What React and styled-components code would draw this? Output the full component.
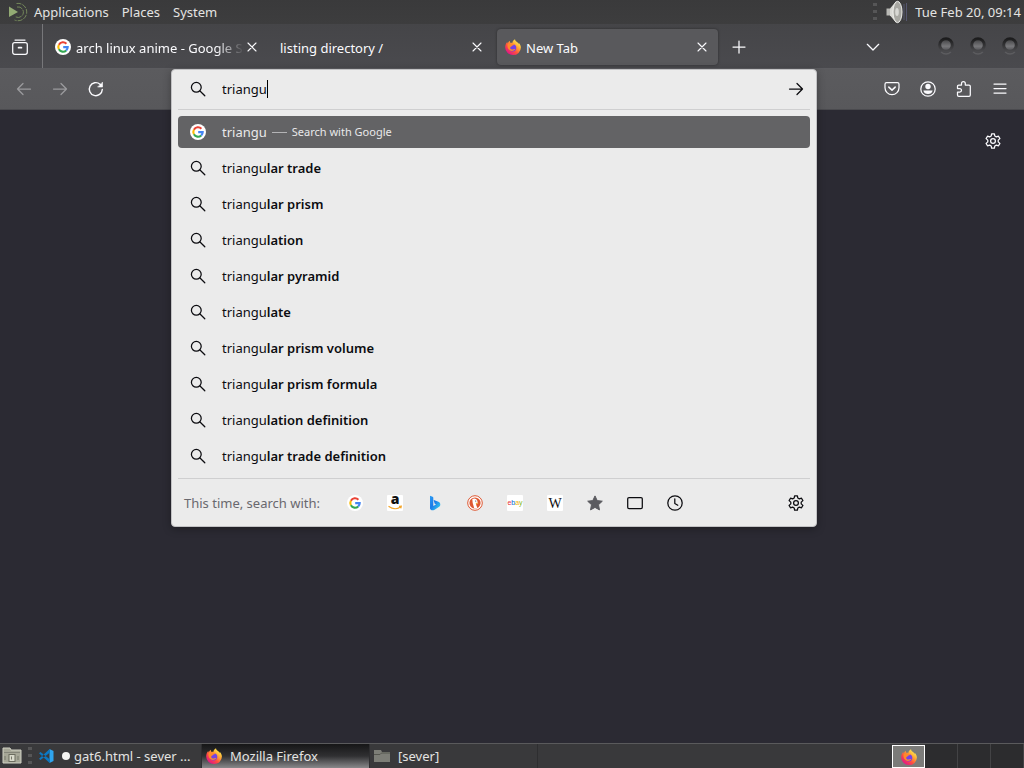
import React, { useState } from "react";
import styled, { createGlobalStyle } from "styled-components";

const GlobalStyle = createGlobalStyle`
  *, *::before, *::after {
    box-sizing: border-box;
  }

  body {
    margin: 0;
    background: #2b2a33;
    font-family: "Noto Sans", sans-serif;
    font-size: 13px;
    line-height: 20px;
    color: #fbfbfe;
  }

  button, input {
    margin: 0;
    padding: 0;
    border: none;
    outline: none;
    background: none;
    color: inherit;
    font: inherit;
    text-align: left;
  }

  svg {
    display: block;
    flex: none;
    overflow: visible;
  }
`;

const Desktop = styled.div`
  display: flex;
  flex-direction: column;
  min-height: 100vh;
`;

/* ---------- top panel ---------- */

const TopPanel = styled.header`
  display: flex;
  align-items: center;
  height: 24px;
  padding: 0 3px 0 8px;
  background: linear-gradient(#3a3a3b, #3d3d3e);
  color: #e4e4e2;
`;

const PanelMenu = styled.nav`
  display: flex;
  align-items: center;
  gap: 13px;
  margin-left: 6px;
`;

const PanelStatus = styled.div`
  display: flex;
  align-items: center;
  gap: 7px;
  margin-left: auto;
`;

const Grip = styled.span`
  width: 4px;
  height: 18px;
  background: repeating-linear-gradient(#565657 0 3px, #3a3a3b 3px 7px);
`;

/* ---------- tab strip ---------- */

const TabStrip = styled.div`
  display: flex;
  align-items: center;
  height: 45px;
  background: linear-gradient(#454548, #4a4a4e);
  border-bottom: 1px solid #5c5c60;
`;

const RecentButton = styled.button`
  display: flex;
  align-items: center;
  align-self: stretch;
  width: 43px;
  padding: 2px 0 0 12px;
  border-right: 1px solid #77777a;
`;

const Tabs = styled.div`
  display: flex;
  flex: 0 1 auto;
  gap: 4px;
  min-width: 0;
  margin-left: 4px;
  padding-top: 2px;
`;

const Tab = styled.div`
  display: flex;
  align-items: center;
  flex: 0 1 221px;
  width: 221px;
  min-width: 80px;
  height: 36px;
  padding: 0 8px;
  border-radius: 4px;
  background: ${props => props.$active ? '#59595c' : 'transparent'};
  box-shadow: ${props => props.$active ? '0 0 3px rgba(0, 0, 0, 0.4)' : 'none'};
`;

const TabLabel = styled.button`
  display: flex;
  align-items: center;
  gap: 5px;
  flex: 1;
  min-width: 0;
  overflow: hidden;
  white-space: nowrap;
  mask-image: ${props => props.$fade ? 'linear-gradient(to right, #000 calc(100% - 28px), transparent)' : 'none'};
`;

const TabTitle = styled.span`
  padding-top: 2px;
`;

const CloseButton = styled.button`
  display: flex;
  padding: 3px;
`;

const NewTabButton = styled.button`
  display: flex;
  padding: 2px 13px 0;
`;

const WindowControls = styled.div`
  display: flex;
  align-items: center;
  gap: 12px;
  margin-left: auto;
  padding-right: 4px;
`;

const AllTabsButton = styled.button`
  display: flex;
  margin-right: 43px;
  padding-top: 2px;
`;

const WindowButton = styled.button`
  display: flex;
`;

/* ---------- navigation bar ---------- */

const NavBar = styled.div`
  display: flex;
  align-items: flex-start;
  height: 41px;
  background: linear-gradient(#5b5b5e, #58585b);
  border-bottom: 1px solid #4a4a4e;
`;

const NavGroup = styled.div`
  display: flex;
  align-items: center;
  gap: 20px;
  height: 40px;
  padding: 0 16px;
`;

const NavButton = styled.button`
  display: flex;
  opacity: ${props => props.disabled ? 0.4 : 1};
`;

const UrlArea = styled.div`
  position: relative;
  flex: 1;
  height: 40px;
  margin: 0 51px;
`;

const UrlPopup = styled.form`
  position: absolute;
  z-index: 2;
  top: 0;
  left: 0;
  right: 0;
  padding: 0 6px;
  border: 1px solid #c2c2c4;
  border-radius: 4px;
  background: #ebebeb;
  color: #0c0c10;
  box-shadow: 0 2px 8px rgba(0, 0, 0, 0.3);
`;

const UrlRow = styled.div`
  display: flex;
  align-items: center;
  height: 40px;
  padding: 0 6px 2px 12px;
  border-bottom: 1px solid #cfcfd0;
`;

const UrlInput = styled.input`
  field-sizing: content;
  min-width: 8px;
  margin-left: 16px;
  caret-color: transparent;
`;

const Caret = styled.span`
  width: 1px;
  height: 18px;
  background: #000;
`;

const GoButton = styled.button`
  display: flex;
  margin-left: auto;
`;

const Results = styled.div`
  display: flex;
  flex-direction: column;
  gap: 4px;
  padding: 6px 0;
`;

const Result = styled.button`
  display: flex;
  align-items: center;
  height: 32px;
  padding: 0 12px;
  border-radius: 4px;
  background: ${props => props.$selected ? '#636365' : 'transparent'};
  color: ${props => props.$selected ? '#e9e9ea' : 'inherit'};
`;

const ResultText = styled.span`
  margin-left: 16px;
  white-space: pre;

  strong {
    font-weight: 600;
  }
`;

const ResultAction = styled.span`
  margin-left: 5px;
  font-size: 11px;
`;

const Dash = styled.span`
  width: 15px;
  height: 1px;
  margin-left: 5px;
  background: #b4b4b6;
`;

const OneOffs = styled.div`
  display: flex;
  align-items: center;
  height: 48px;
  padding: 0 6px;
  border-top: 1px solid #cfcfd0;
`;

const OneOffLabel = styled.span`
  width: 151px;
  color: #69686e;
`;

const OneOffButton = styled.button`
  display: flex;
  justify-content: center;
  width: 40px;
`;

/* ---------- page ---------- */

const Page = styled.main`
  display: flex;
  justify-content: flex-end;
  align-items: flex-start;
  flex: 1;
  padding: 23px;
  background: #2b2a33;
`;

const PageButton = styled.button`
  display: flex;
`;

/* ---------- bottom panel ---------- */

const BottomPanel = styled.footer`
  display: flex;
  align-items: center;
  height: 25px;
  padding-left: 2px;
  border-top: 1px solid #5a5a5c;
  background: #39393b;
  color: #e4e4e2;
`;

const DesktopButton = styled.button`
  display: flex;
  margin-right: 6px;
`;

const TaskList = styled.div`
  display: flex;
  align-self: stretch;
  flex: 1;
  min-width: 0;
  margin-left: 2px;
`;

const Task = styled.button`
  display: flex;
  align-items: center;
  gap: 8px;
  flex: 0 1 168px;
  min-width: 0;
  padding: 0 4px;
  white-space: nowrap;
  border-right: 1px solid #2e2e30;
  background: ${props => props.$active ? 'linear-gradient(#161617, #303032 50%, #88888a)' : 'transparent'};
`;

const TaskTitle = styled.span`
  display: flex;
  align-items: center;
  gap: 4px;
`;

const UnsavedDot = styled.i`
  width: 8px;
  height: 8px;
  border-radius: 50%;
  background: #f4f4f2;
`;

const Workspaces = styled.div`
  display: flex;
  align-self: stretch;
`;

const Workspace = styled.button`
  display: flex;
  justify-content: center;
  align-items: center;
  width: 33px;
  border-right: 1px solid #434345;
  background: #2c2c2e;

  ${props => props.$active && `
    margin-top: 1px;
    border: 1px solid #fff;
    background: #7b7b79;
  `}
`;

/* ---------- icons ---------- */

const Icon = ({ size = 16, children }) => (
  <svg width={size} height={size} viewBox="0 0 16 16" fill="none" stroke="currentColor" strokeWidth="1.25" strokeLinecap="round" strokeLinejoin="round" aria-hidden="true">
    {children}
  </svg>
);

const SearchIcon = () => (
  <Icon><circle cx="6.3" cy="6.3" r="4.9" /><path d="M10 10l4.8 4.8" /></Icon>
);

const CloseIcon = () => (
  <svg width="10" height="10" viewBox="0 0 10 10" stroke="currentColor" strokeWidth="1.1" strokeLinecap="round" aria-hidden="true">
    <path d="M1 1l8 8M9 1L1 9" />
  </svg>
);

const GearIcon = () => (
  <Icon>
    <circle cx="8" cy="8" r="2.4" />
    <path d="M6.6.8h2.8L9.800 3l1.600.9 2.100-.7 1.400 2.400-1.700 1.500v1.800l1.700 1.500-1.400 2.400-2.100-.7-1.600.9-.4 2.200H6.600L6.200 13l-1.600-.9-2.100.7-1.400-2.400 1.700-1.500V7.100L1.100 5.600l1.400-2.400 2.100.7L6.200 3z" />
  </Icon>
);

const GoogleIcon = ({ size = 16 }) => (
  <svg width={size} height={size} viewBox="0 0 16 16" aria-hidden="true">
    <circle cx="8" cy="8" r="8" fill="#fff" />
    <g fill="none" strokeWidth="2.1">
      <path d="M11.4 4.7A4.7 4.7 0 0 0 3.9 5.7" stroke="#ea4335" />
      <path d="M3.9 5.7a4.7 4.7 0 0 0 0 4.6" stroke="#fbbc05" />
      <path d="M3.9 10.3a4.7 4.7 0 0 0 7.3 1.1" stroke="#34a853" />
      <path d="M11.2 11.4A4.7 4.7 0 0 0 12.7 8.1H8.2" stroke="#4285f4" />
    </g>
  </svg>
);

const FirefoxIcon = () => (
  <svg width="16" height="16" viewBox="0 0 16 16" aria-hidden="true">
    <defs>
      <linearGradient id="fox" x1="0.85" y1="0.1" x2="0.2" y2="0.9">
        <stop offset="0" stopColor="#fff44f" />
        <stop offset="0.35" stopColor="#ffa436" />
        <stop offset="0.65" stopColor="#ff4f3e" />
        <stop offset="1" stopColor="#e31587" />
      </linearGradient>
    </defs>
    <path fill="url(#fox)" d="M10 .2c.2 1.4 1 2 2 2.9.9.8 1.3 1.3 1.7 2.1.1-.6 0-1-.1-1.4C15 5 15.9 6.700 15.900 8.600A7.800 7.500 0 0 1 .2 8.500C.1 6.200 1 4.400 2.300 2.900l.3 1.500C3.300 3.200 4 2.400 5 1.800c-.2.7-.1 1.400.2 1.900.8-.1 1.500 0 2.100.3C7.500 2.300 8.500.9 10 .2z" />
    <circle cx="7.7" cy="8.8" r="3.6" fill="#7542e5" />
    <path fill="#ff8a2b" d="M2.600 5.200C4.200 3.800 6 4 7.300 4.600c1 .1 1.700.4 2 .8-.5.9-1.700.8-2.100 1.400-.5.9-1.500.8-2 1.600-.2 1.200.8 2 2 2.100 1.300 0 2-.9 3.200-.5-1.300 2-4.600 2.800-6.500.6C2.600 9.200 2.200 7 2.600 5.200z" />
  </svg>
);

const AmazonIcon = () => (
  <svg width="16" height="16" viewBox="0 0 16 16" aria-hidden="true">
    <rect width="16" height="16" rx="1" fill="#fff" />
    <text x="8" y="9" textAnchor="middle" fontFamily="Open Sans, sans-serif" fontWeight="800" fontSize="14" fill="#111">a</text>
    <path d="M1.5 11.3c4 2.9 8.500 3 12 .7M12 11.300l2.300-.2-.5 2.300" fill="none" stroke="#f3a52b" strokeWidth="1.2" />
  </svg>
);

const BingIcon = () => (
  <svg width="16" height="16" viewBox="0 0 16 16" aria-hidden="true">
    <defs>
      <linearGradient id="bing" x1="0" y1="0" x2="1" y2="1">
        <stop offset="0" stopColor="#2b9df4" />
        <stop offset="0.45" stopColor="#1b7ae8" />
        <stop offset="1" stopColor="#38dcf0" />
      </linearGradient>
    </defs>
    <path fill="url(#bing)" d="M3 .8l2.600 1c.5.200.7.500.7 1v8.200l2.700-1.500-1.300-.8-.9-3c-.1-.5.2-.7.7-.5l3.900 1.600c1.500.7 1.900 1.700 1.900 2.800 0 1.100-.5 1.900-1.500 2.500l-4.600 2.800C5.200 16 3 15 3 12.900z" />
  </svg>
);

const DuckIcon = () => (
  <svg width="16" height="16" viewBox="0 0 16 16" aria-hidden="true">
    <circle cx="8" cy="8" r="7.3" fill="#fff" stroke="#de5833" strokeWidth="1" />
    <circle cx="8" cy="8" r="5.6" fill="#de5833" />
    <path fill="#fff" d="M5.3 4.300c1.500-1.600 4.700-.8 5.100 1.700l.3 2.300-1.700 1.200 1.300 3.300c-1 .6-2.300.7-3.100.4L5.700 8z" />
    <path fill="#f9b233" d="M8.600 7.800l3 .2-2.500 1.200z" />
    <circle cx="8.7" cy="6" r="0.6" fill="#334" />
  </svg>
);

const EbayIcon = () => (
  <svg width="16" height="16" viewBox="0 0 16 16" aria-hidden="true">
    <rect width="16" height="16" rx="1" fill="#fff" />
    <text x="8" y="10" textAnchor="middle" fontFamily="Liberation Sans, sans-serif" fontSize="7">
      <tspan fill="#e53238">e</tspan><tspan fill="#0064d2">b</tspan><tspan fill="#f5af02">a</tspan><tspan fill="#86b817">y</tspan>
    </text>
  </svg>
);

const WikiIcon = () => (
  <svg width="16" height="16" viewBox="0 0 16 16" aria-hidden="true">
    <rect width="16" height="16" rx="1" fill="#fff" />
    <text x="8" y="13" textAnchor="middle" fontFamily="Liberation Serif, serif" fontSize="14" fill="#111">W</text>
  </svg>
);

const StarIcon = () => (
  <svg width="16" height="16" viewBox="0 0 16 16" aria-hidden="true">
    <path fill="#5b5b60" stroke="#5b5b60" strokeLinejoin="round" d="M8 .9l2.200 4.700 5.100.6-3.800 3.500 1 5.200L8 12.400l-4.500 2.500 1-5.200L.7 6.200l5.100-.6z" />
  </svg>
);

const TabsIcon = () => (
  <Icon><rect x="0.7" y="2.5" width="14.6" height="11" rx="1.3" /></Icon>
);

const ClockIcon = () => (
  <Icon><circle cx="8" cy="8" r="7.2" /><path d="M7.8 3.8V8.500l3 1.800" /></Icon>
);

const RecentIcon = () => (
  <Icon><path d="M3 1h10" /><rect x="0.7" y="3.700" width="14.600" height="11.600" rx="2" /><path d="M6.600 8.700h2.800" strokeWidth="1.800" /></Icon>
);

const WindowDot = () => (
  <svg width="20" height="20" viewBox="0 0 20 20" aria-hidden="true">
    <defs>
      <linearGradient id="dotFill" x1="0" y1="0" x2="0" y2="1">
        <stop offset="0" stopColor="#3c3c3e" />
        <stop offset="0.6" stopColor="#77777a" />
        <stop offset="1" stopColor="#4a4a4e" />
      </linearGradient>
      <linearGradient id="dotRing" x1="0" y1="0" x2="0" y2="1">
        <stop offset="0" stopColor="#1c1c1d" />
        <stop offset="1" stopColor="#4a4a4d" />
      </linearGradient>
    </defs>
    <path d="M5 16q5 4 10 0" fill="none" stroke="#5c5c5f" strokeWidth="1.5" />
    <circle cx="10" cy="9" r="6.3" fill="url(#dotFill)" stroke="url(#dotRing)" strokeWidth="3" />
  </svg>
);

const MateIcon = () => (
  <svg width="20" height="20" viewBox="0 0 20 20" fill="none" stroke="#73875a" aria-hidden="true">
    <path d="M1 4.5v10.500l9-5z" fill="#93aa74" stroke="none" />
    <path d="M8.500 1.500a8.700 8.700 0 1 1-2 16.500" strokeDasharray="5 1" />
    <path d="M9 5a5.300 5.300 0 1 1-1.500 9.800" strokeDasharray="6 1" />
  </svg>
);

const VolumeIcon = () => (
  <svg width="24" height="24" viewBox="0 0 24 24" aria-hidden="true">
    <path d="M2.500 8.500h4v7h-4z" fill="#b9b9b5" />
    <path d="M6 8.500l6-7q2 10.500 0 21l-6-7z" fill="#d8d8d4" />
    <ellipse cx="13.500" cy="12" rx="4.500" ry="10.700" fill="#a8a8a3" stroke="#f0f0ed" />
    <ellipse cx="13" cy="12" rx="1.800" ry="4" fill="#d8d8d4" />
    <path d="M20 4v16M22.500 3v18" stroke="#55566f" />
  </svg>
);

const FolderIcon = ({ color = '#7d7e77' }) => (
  <svg width="16" height="16" viewBox="0 0 16 16" aria-hidden="true">
    <path d="M0 2h7l1 2h8v10H0z" fill={color} />
    <path d="M0 6.500h6l1.500-1.500H16" stroke="#55564f" fill="none" />
  </svg>
);

const DesktopIcon = () => (
  <svg width="20" height="18" viewBox="0 0 20 18" aria-hidden="true">
    <path d="M1 1h7l1 2h10v13H1z" fill="#a6a797" stroke="#d0d1c4" />
    <path d="M2 5.500h16" stroke="#85867a" />
    <rect x="7" y="7.500" width="6" height="7" fill="#d9dacb" stroke="#6b6c5f" />
    <path d="M9.500 9.500v3M3 9v4M16 9v4" stroke="#77786a" />
  </svg>
);

const CodeIcon = () => (
  <svg width="16" height="16" viewBox="0 0 16 16" aria-hidden="true">
    <path d="M11.500 1L15.500 3v10l-4 2z" fill="#2fa5ee" />
    <path d="M1 5.200L2.500 4l9.200 7.200V15zM1 10.800L2.500 12l9.200-7.200V1z" fill="#0b78c4" />
  </svg>
);

/* ---------- data ---------- */

const suggestions = [
  "lar trade",
  "lar prism",
  "lation",
  "lar pyramid",
  "late",
  "lar prism volume",
  "lar prism formula",
  "lation definition",
  "lar trade definition",
];

const engines = [
  { name: "Google", icon: <GoogleIcon /> },
  { name: "Amazon", icon: <AmazonIcon /> },
  { name: "Bing", icon: <BingIcon /> },
  { name: "DuckDuckGo", icon: <DuckIcon /> },
  { name: "eBay", icon: <EbayIcon /> },
  { name: "Wikipedia", icon: <WikiIcon /> },
  { name: "Bookmarks", icon: <StarIcon /> },
  { name: "Tabs", icon: <TabsIcon /> },
  { name: "History", icon: <ClockIcon /> },
];

const tabs = [
  { title: "arch linux anime - Google Search", icon: <GoogleIcon />, fade: true },
  { title: "listing directory /" },
  { title: "New Tab", icon: <FirefoxIcon /> },
];

function UrlBar() {
  const [query, setQuery] = useState("triangu");

  return (
    <UrlArea>
      <UrlPopup onSubmit={(e) => e.preventDefault()}>
        <UrlRow>
          <SearchIcon />
          <UrlInput aria-label="Search or enter address" value={query} onChange={(e) => setQuery(e.target.value)} />
          <Caret />
          <GoButton type="submit" aria-label="Go"><Icon><path d="M1.500 8h13M9 2.500L14.500 8 9 13.500" /></Icon></GoButton>
        </UrlRow>
        <Results>
          <Result type="button" $selected>
            <GoogleIcon />
            <ResultText>{query}</ResultText>
            <Dash />
            <ResultAction>Search with Google</ResultAction>
          </Result>
          {suggestions.map((rest) => (
            <Result type="button" key={rest}>
              <SearchIcon />
              <ResultText>triangu<strong>{rest}</strong></ResultText>
            </Result>
          ))}
        </Results>
        <OneOffs>
          <OneOffLabel>This time, search with:</OneOffLabel>
          {engines.map(({ name, icon }) => (
            <OneOffButton type="button" key={name} aria-label={name}>{icon}</OneOffButton>
          ))}
          <GoButton type="button" aria-label="Search settings"><GearIcon /></GoButton>
        </OneOffs>
      </UrlPopup>
    </UrlArea>
  );
}

export default function App() {
  const [active, setActive] = useState(2);

  return (
    <Desktop>
      <GlobalStyle />
      <TopPanel>
        <MateIcon />
        <PanelMenu>
          <button>Applications</button>
          <button>Places</button>
          <button>System</button>
        </PanelMenu>
        <PanelStatus>
          <Grip />
          <VolumeIcon />
          <span>Tue Feb 20, 09:14</span>
        </PanelStatus>
      </TopPanel>

      <TabStrip>
        <RecentButton aria-label="Recent browsing"><RecentIcon /></RecentButton>
        <Tabs>
          {tabs.map(({ title, icon, fade }, i) => (
            <Tab key={title} $active={active === i}>
              <TabLabel $fade={fade} onClick={() => setActive(i)}>{icon}<TabTitle>{title}</TabTitle></TabLabel>
              <CloseButton aria-label={"Close " + title}><CloseIcon /></CloseButton>
            </Tab>
          ))}
        </Tabs>
        <NewTabButton aria-label="New tab"><Icon><path d="M8 2v12M2 8h12" /></Icon></NewTabButton>
        <WindowControls>
          <AllTabsButton aria-label="List all tabs"><Icon><path d="M2.300 5.300L8 11l5.700-5.700" /></Icon></AllTabsButton>
          <WindowButton aria-label="Minimize"><WindowDot /></WindowButton>
          <WindowButton aria-label="Maximize"><WindowDot /></WindowButton>
          <WindowButton aria-label="Close window"><WindowDot /></WindowButton>
        </WindowControls>
      </TabStrip>

      <NavBar>
        <NavGroup>
          <NavButton disabled aria-label="Back"><Icon><path d="M14.500 8h-13M7 2.500L1.500 8 7 13.500" /></Icon></NavButton>
          <NavButton disabled aria-label="Forward"><Icon><path d="M1.500 8h13M9 2.500L14.500 8 9 13.500" /></Icon></NavButton>
          <NavButton aria-label="Reload">
            <Icon><path d="M14.300 8.500A6.500 6.500 0 1 1 12 3.200l1.500 1.500" strokeWidth="1.400" /><path d="M14.500 1.500v4.500H10z" fill="currentColor" strokeWidth="0.600" /></Icon>
          </NavButton>
        </NavGroup>
        <UrlBar />
        <NavGroup>
          <NavButton aria-label="Save to Pocket">
            <Icon><path d="M2.500 1.700h11a1.500 1.500 0 0 1 1.500 1.500v3.500a7 7 0 0 1-14 0V3.200A1.500 1.500 0 0 1 2.500 1.700z" /><path d="M4.800 6.100L8 9.100l3.200-3" strokeWidth="1.500" /></Icon>
          </NavButton>
          <NavButton aria-label="Account">
            <Icon><circle cx="8" cy="8" r="7.200" /><circle cx="8" cy="5.500" r="2.700" fill="currentColor" stroke="none" /><path d="M3.400 9.400h9.200c-.3 2.200-2.200 3.600-4.600 3.600s-4.300-1.400-4.600-3.600z" fill="currentColor" stroke="none" /></Icon>
          </NavButton>
          <NavButton aria-label="Extensions">
            <Icon><path d="M5.500 4V2.500a1.900 1.900 0 0 1 3.800 0V4H13a1.300 1.300 0 0 1 1.300 1.300v8.700a1.300 1.300 0 0 1-1.300 1.300H2.800a1.300 1.300 0 0 1-1.300-1.300v-3h2.300a1.700 1.700 0 0 0 0-3.400H1.500V5.300A1.300 1.300 0 0 1 2.800 4z" /></Icon>
          </NavButton>
          <NavButton aria-label="Menu"><Icon><path d="M2 3h12M2 7.500h12M2 12h12" /></Icon></NavButton>
        </NavGroup>
      </NavBar>

      <Page>
        <PageButton aria-label="Personalize new tab"><GearIcon /></PageButton>
      </Page>

      <BottomPanel>
        <DesktopButton aria-label="Show desktop"><DesktopIcon /></DesktopButton>
        <Grip />
        <TaskList>
          <Task><CodeIcon /><TaskTitle><UnsavedDot />gat6.html - sever ...</TaskTitle></Task>
          <Task $active><FirefoxIcon />Mozilla Firefox</Task>
          <Task><FolderIcon />[sever]</Task>
        </TaskList>
        <Workspaces>
          <Workspace $active aria-label="Workspace 1"><FirefoxIcon /></Workspace>
          <Workspace aria-label="Workspace 2" />
          <Workspace aria-label="Workspace 3" />
          <Workspace aria-label="Workspace 4" />
        </Workspaces>
      </BottomPanel>
    </Desktop>
  );
}
